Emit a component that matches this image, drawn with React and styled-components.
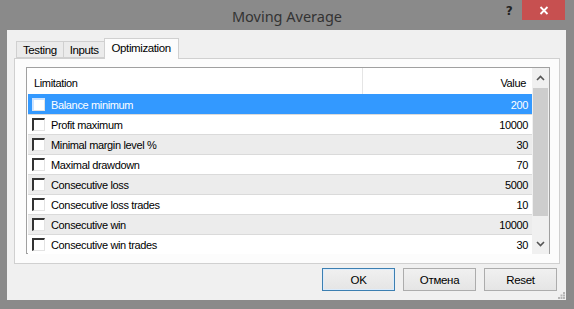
import styled, { createGlobalStyle } from "styled-components";

const GlobalStyle = createGlobalStyle`
  html, body { margin: 0; padding: 0; background: #8a8a8a; }
  * { box-sizing: border-box; }
`;

const rows = [
  { name: "Balance minimum", value: "200" },
  { name: "Profit maximum", value: "10000" },
  { name: "Minimal margin level %", value: "30" },
  { name: "Maximal drawdown", value: "70" },
  { name: "Consecutive loss", value: "5000" },
  { name: "Consecutive loss trades", value: "10" },
  { name: "Consecutive win", value: "10000" },
  { name: "Consecutive win trades", value: "30" },
];

export default function App() {
  return (
    <>
      <GlobalStyle />
      <Window>
        <TitleBar>
          <span />
          <Title>Moving Average</Title>
          <Caption>
            <Help>?</Help>
            <Close>
              <svg width="10" height="9" viewBox="0 0 10 9">
                <path d="M1.5 1 L8.5 8 M8.5 1 L1.5 8" stroke="#fff" strokeWidth="1.8" />
              </svg>
            </Close>
          </Caption>
        </TitleBar>
        <Client>
          <TabStrip>
            <Tab>Testing</Tab>
            <Tab>Inputs</Tab>
            <Tab $active>Optimization</Tab>
          </TabStrip>
          <Panel>
            <List>
              <Grid>
                <Header>
                  <HeadCell>Limitation</HeadCell>
                  <HeadCell $right>Value</HeadCell>
                </Header>
                {rows.map((r, i) => (
                  <Row key={r.name} $selected={i === 0} $stripe={i % 2 === 0}>
                    <NameCell>
                      <Check $selected={i === 0} />
                      {r.name}
                    </NameCell>
                    <ValueCell>{r.value}</ValueCell>
                  </Row>
                ))}
              </Grid>
              <Scroll>
                <Arrow>
                  <svg width="9" height="6" viewBox="0 0 9 6">
                    <path d="M1 5 L4.5 1.5 L8 5" stroke="#555" strokeWidth="1.6" fill="none" />
                  </svg>
                </Arrow>
                <Track>
                  <Thumb />
                </Track>
                <Arrow>
                  <svg width="9" height="6" viewBox="0 0 9 6">
                    <path d="M1 1 L4.5 4.5 L8 1" stroke="#555" strokeWidth="1.6" fill="none" />
                  </svg>
                </Arrow>
              </Scroll>
            </List>
          </Panel>
          <Buttons>
            <Button $default>OK</Button>
            <Button>Отмена</Button>
            <Button>Reset</Button>
            <Grip>
              <svg width="7" height="7" viewBox="0 0 7 7">
                <g fill="#b5b5b5">
                  <rect x="5" y="0" width="2" height="2" />
                  <rect x="2.5" y="2.5" width="2" height="2" />
                  <rect x="5" y="2.5" width="2" height="2" />
                  <rect x="0" y="5" width="2" height="2" />
                  <rect x="2.5" y="5" width="2" height="2" />
                  <rect x="5" y="5" width="2" height="2" />
                </g>
              </svg>
            </Grip>
          </Buttons>
        </Client>
      </Window>
    </>
  );
}

const Window = styled.div`
  width: 574px;
  height: 309px;
  background: #8a8a8a;
  display: flex;
  flex-direction: column;
  font-family: "Liberation Sans", Arial, sans-serif;
  font-size: 11px;
  letter-spacing: -0.35px;
  color: #000;
`;

const TitleBar = styled.div`
  height: 30px;
  display: grid;
  grid-template-columns: 1fr auto 1fr;
  align-items: start;
`;

const Title = styled.div`
  font-family: "Noto Sans", "Open Sans", sans-serif;
  font-size: 14.5px;
  letter-spacing: 0;
  color: #333;
  line-height: 32px;
`;

const Caption = styled.div`
  display: flex;
  justify-content: flex-end;
  align-items: flex-start;
  padding-right: 9px;
`;

const Help = styled.div`
  width: 20px;
  height: 20px;
  margin-right: 3px;
  font-family: "DejaVu Sans", sans-serif;
  font-weight: bold;
  font-size: 12px;
  color: #222;
  text-align: center;
  line-height: 22px;
`;

const Close = styled.div`
  width: 43px;
  height: 20px;
  background: #c75050;
  display: flex;
  align-items: center;
  justify-content: center;
`;

const Client = styled.div`
  flex: 1;
  margin: 0 8px 9px 7px;
  background: #f0f0f0;
  display: flex;
  flex-direction: column;
  padding: 8px 6px 0 7px;
`;

const TabStrip = styled.div`
  height: 20px;
  display: flex;
  align-items: flex-end;
  padding-left: 2px;
  position: relative;
  z-index: 1;
`;

const Tab = styled.div`
  height: ${(p) => (p.$active ? "21px" : "17px")};
  margin-bottom: ${(p) => (p.$active ? "-1px" : "0")};
  margin-left: ${(p) => (p.$active ? "-1px" : "0")};
  padding: ${(p) => (p.$active ? "3px 7px 0 7px" : "2px 6px 0 6px")};
  border: 1px solid #d0d0d0;
  border-bottom: ${(p) => (p.$active ? "none" : "1px solid #d0d0d0")};
  border-right: ${(p) => (p.$active ? "1px solid #d0d0d0" : "none")};
  background: ${(p) => (p.$active ? "#fcfcfc" : "#ebebeb")};
  font-size: 11.5px;
  letter-spacing: -0.4px;
  white-space: nowrap;
  &:nth-child(2) { border-right: none; }
`;

const Panel = styled.div`
  height: 206px;
  border: 1px solid #d0d0d0;
  background: #fcfcfc;
  padding: 8px 9px 9px 11px;
  display: flex;
`;

const List = styled.div`
  flex: 1;
  border: 1px solid #a0a0a0;
  background: #fff;
  display: grid;
  grid-template-columns: 1fr 17px;
  padding-left: 1px;
`;

const Grid = styled.div`
  display: flex;
  flex-direction: column;
`;

const Header = styled.div`
  height: 26px;
  display: grid;
  grid-template-columns: 334px 1fr;
  align-items: center;
`;

const HeadCell = styled.div`
  height: 100%;
  display: flex;
  align-items: center;
  padding-top: 4px;
  justify-content: ${(p) => (p.$right ? "flex-end" : "flex-start")};
  padding-left: ${(p) => (p.$right ? "0" : "6px")};
  padding-right: ${(p) => (p.$right ? "6px" : "0")};
  border-left: ${(p) => (p.$right ? "1px solid #e5e5e5" : "none")};
`;

const Row = styled.div`
  height: 20px;
  display: grid;
  grid-template-columns: 334px 1fr;
  align-items: center;
  border-top: 1px solid ${(p) => (p.$selected ? "#3399ff" : "#dadada")};
  background: ${(p) => (p.$selected ? "#3399ff" : p.$stripe ? "#ececec" : "#fff")};
  color: ${(p) => (p.$selected ? "#fff" : "#000")};
`;

const NameCell = styled.div`
  display: flex;
  align-items: center;
  padding-left: 4px;
  gap: 6px;
`;

const ValueCell = styled.div`
  text-align: right;
  padding-right: 4px;
`;

const Check = styled.span`
  width: 13px;
  height: 13px;
  background: #fff;
  border-top: 2px solid ${(p) => (p.$selected ? "#cfe4ff" : "#333")};
  border-left: 2px solid ${(p) => (p.$selected ? "#cfe4ff" : "#333")};
  border-right: 1px solid #e3e3e3;
  border-bottom: 1px solid #e3e3e3;
  flex: none;
`;

const Scroll = styled.div`
  display: flex;
  flex-direction: column;
  background: #f0f0f0;
`;

const Arrow = styled.div`
  height: 20px;
  display: flex;
  align-items: center;
  justify-content: center;
`;

const Track = styled.div`
  flex: 1;
  padding: 0 1px;
`;

const Thumb = styled.div`
  height: 128px;
  background: #cdcdcd;
`;

const Buttons = styled.div`
  display: flex;
  justify-content: flex-end;
  align-items: flex-start;
  gap: 8px;
  margin-top: 4px;
  padding-right: 3px;
  height: 32px;
  position: relative;
`;

const Button = styled.div`
  width: 73px;
  height: 23px;
  border: 1px solid ${(p) => (p.$default ? "#3c7fb1" : "#acacac")};
  background: linear-gradient(#f0f0f0, #e5e5e5);
  display: flex;
  align-items: center;
  justify-content: center;
  font-size: 11.5px;
  letter-spacing: -0.3px;
  box-shadow: ${(p) => (p.$default ? "inset 0 0 0 1px #dcecfc" : "none")};
`;

const Grip = styled.div`
  position: absolute;
  right: -5px;
  bottom: 1px;
  line-height: 0;
`;
